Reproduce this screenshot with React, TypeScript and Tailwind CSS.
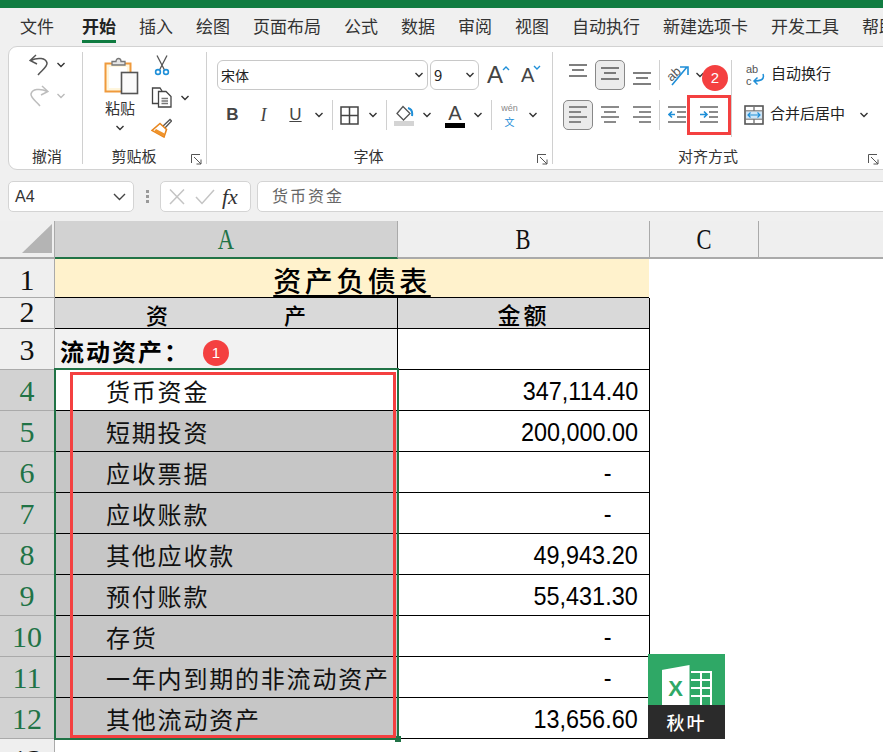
import React from "react";

const tabs = ["文件", "开始", "插入", "绘图", "页面布局", "公式", "数据", "审阅", "视图", "自动执行", "新建选项卡", "开发工具", "帮助"];

const rows = [
  { no: "4", name: "货币资金", value: "347,114.40" },
  { no: "5", name: "短期投资", value: "200,000.00" },
  { no: "6", name: "应收票据", value: "-" },
  { no: "7", name: "应收账款", value: "-" },
  { no: "8", name: "其他应收款", value: "49,943.20" },
  { no: "9", name: "预付账款", value: "55,431.30" },
  { no: "10", name: "存货", value: "-" },
  { no: "11", name: "一年内到期的非流动资产", value: "-" },
  { no: "12", name: "其他流动资产", value: "13,656.60" },
];

const Chev = ({ light }: { light?: boolean }) => (
  <svg width="10" height="6" viewBox="0 0 10 6" fill="none" stroke={light ? "#bbb" : "#333"} strokeWidth="1.4">
    <path d="M1.5 1 L5 4.5 L8.5 1" />
  </svg>
);

const Launcher = () => (
  <svg className="absolute right-[4px] bottom-[-1px]" width="11" height="11" viewBox="0 0 11 11" fill="none" stroke="#555" strokeWidth="1">
    <path d="M0.5 9 V0.5 H9" />
    <path d="M3 3 L10 10 M10 5.5 V10 H5.5" />
  </svg>
);

const Group = ({ label, className, labelClass, launcher, children }: { label: string; className: string; labelClass?: string; launcher?: boolean; children: React.ReactNode }) => (
  <div className={`relative flex flex-col shrink-0 h-[112px] ${className}`}>
    <div className="flex-1 min-h-0">{children}</div>
    <div className={`h-[18px] leading-[20px] text-center text-[15px] text-[#333] ${labelClass ?? ""}`}>{label}</div>
    {launcher && <Launcher />}
  </div>
);

// three horizontal lines for the vertical alignment buttons
const VAlign = ({ ys }: { ys: number[] }) => (
  <svg width="18" height="30" viewBox="0 0 18 30" stroke="#555" strokeWidth="1.4">
    <path d={`M0 ${ys[0]} H18 M3 ${ys[1]} H15 M0 ${ys[2]} H18`} />
  </svg>
);

// four lines for the horizontal alignment buttons
const HAlign = ({ mode }: { mode: "left" | "center" | "right" }) => {
  const short = mode === "left" ? "M0 {y} H12" : mode === "center" ? "M3 {y} H15" : "M6 {y} H18";
  return (
    <svg width="18" height="30" viewBox="0 0 18 30" stroke="#666" strokeWidth="1.6">
      <path d={`M0 7 H18 ${short.replace("{y}", "12")} M0 17 H18 ${short.replace("{y}", "22")}`} />
    </svg>
  );
};

const Indent = ({ out }: { out?: boolean }) => (
  <svg width="18" height="30" viewBox="0 0 18 30" fill="none">
    <path d="M0 7 H18 M9 12 H18 M9 17 H18 M0 22 H18" stroke="#666" strokeWidth="1.6" />
    {out ? (
      <path d="M7 14.5 H1 M4 11.5 L1 14.5 L4 17.5" stroke="#1f8fd8" strokeWidth="1.6" />
    ) : (
      <path d="M0 14.5 H7 M4 11.5 L7 14.5 L4 17.5" stroke="#1f8fd8" strokeWidth="1.6" />
    )}
  </svg>
);

const PasteIcon = () => (
  <svg width="36" height="38" viewBox="0 0 36 38" fill="none">
    <rect x="1.5" y="6.5" width="25" height="28" fill="#fff6dd" stroke="#ef9a3c" strokeWidth="2" />
    <rect x="5" y="10" width="18" height="21" fill="#fff" />
    <path d="M8 8 V4.5 H12 C12 0.5 17 0.5 17 4.5 H21 V8 Z" fill="#e6e6e6" stroke="#777" strokeWidth="1.3" />
    <rect x="17.5" y="15.5" width="16" height="21" fill="#fafafa" stroke="#555" strokeWidth="1.6" />
  </svg>
);

const Scissors = () => (
  <svg width="16" height="21" viewBox="0 0 16 21" fill="none">
    <path d="M3 0.5 L10.5 15 M13 0.5 L5.5 15" stroke="#555" strokeWidth="1.3" />
    <circle cx="4" cy="17" r="2.4" stroke="#1f8fd8" strokeWidth="1.6" />
    <circle cx="12" cy="17" r="2.4" stroke="#1f8fd8" strokeWidth="1.6" />
  </svg>
);

const CopyIcon = () => (
  <svg width="21" height="21" viewBox="0 0 21 21" fill="none" stroke="#444" strokeWidth="1.3">
    <path d="M8 16.5 H1.5 V1 H9 L11 4" />
    <path d="M7.5 4.5 H15 L20 9.5 V20 H7.5 Z" fill="#fff" />
    <path d="M10.5 11.5 H17 M10.5 14 H17 M10.5 16.5 H17" stroke="#777" />
  </svg>
);

const BrushIcon = () => (
  <svg width="21" height="20" viewBox="0 0 21 20" fill="none">
    <path d="M11 9 L19 1.5 L20.5 3 L13 11" fill="#fff" stroke="#555" strokeWidth="1.3" />
    <path d="M9 5.5 L15.5 11.5 L13 19 L1 12.5 Z" fill="#fff" stroke="#e8861e" strokeWidth="1.6" />
    <path d="M5 11 L13.5 15.5 L12.5 18.5 L3 13.5 Z" fill="#f0942c" />
  </svg>
);

const OrientIcon = () => (
  <svg className="overflow-visible" width="23" height="24" viewBox="0 0 23 24" fill="none">
    <text x="0" y="16" fontSize="13" fill="#555" transform="rotate(-42 6 12)" fontFamily="Liberation Sans, sans-serif">ab</text>
    <path d="M5 22 L20 4 M13 4 H21 V12" stroke="#1f8fd8" strokeWidth="1.6" />
  </svg>
);

const WrapIcon = () => (
  <svg className="overflow-visible" width="19" height="24" viewBox="0 0 19 24" fill="none">
    <text x="0" y="10" fontSize="11" fill="#555" fontFamily="Liberation Sans, sans-serif">ab</text>
    <text x="0" y="22" fontSize="11" fill="#555" fontFamily="Liberation Sans, sans-serif">c</text>
    <path d="M17 11 C19 17 14 18 8 18 M11.5 14.5 L8 18 L11.5 21.5" stroke="#1f8fd8" strokeWidth="1.5" />
  </svg>
);

const MergeIcon = () => (
  <svg width="20" height="20" viewBox="0 0 20 20" fill="none">
    <rect x="1" y="1" width="18" height="18" fill="#fff" stroke="#555" strokeWidth="1.6" />
    <path d="M1 6 H19 M1 14 H19 M10 1 V6 M10 14 V19" stroke="#777" strokeWidth="1.4" />
    <rect x="2" y="6.5" width="16" height="7" fill="#cfe6f7" />
    <path d="M4 10 H16 M6.5 7.5 L4 10 L6.5 12.5 M13.5 7.5 L16 10 L13.5 12.5" stroke="#1f8fd8" strokeWidth="1.2" />
  </svg>
);

const BorderIcon = () => (
  <svg width="19" height="19" viewBox="0 0 19 19" fill="none" stroke="#444" strokeWidth="1.5">
    <rect x="1" y="1" width="17" height="17" />
    <path d="M9.5 1 V18 M1 9.5 H18" />
  </svg>
);

const FillIcon = () => (
  <svg width="20" height="21" viewBox="0 0 20 21" fill="none">
    <path d="M9 1.5 L16 8.5 L9.5 15 L3 8.5 Z" fill="#fff" stroke="#555" strokeWidth="1.3" />
    <path d="M14 3 C18 4 18.5 8 18 11" stroke="#1f8fd8" strokeWidth="2" />
    <rect x="0" y="16" width="20" height="5" fill="#d4d4d4" />
  </svg>
);

const Sep = () => <div className="w-px h-[30px] bg-[#d0d0d0] shrink-0" />;

const Slot = ({ className, children }: { className: string; children: React.ReactNode }) => (
  <div className={`flex items-center justify-center h-[30px] shrink-0 ${className}`}>{children}</div>
);

export default function App() {
  return (
    <div className="relative w-[883px] h-[752px] overflow-hidden bg-[#f0f0f0] text-[#333] [font-family:'Noto_Sans_CJK_SC','Liberation_Sans',sans-serif]">
      <div className="h-2 bg-[#107c41]" />

      {/* tabs */}
      <div className="h-[38px] flex gap-[23px] pl-[20px] pt-[4px] text-[17px] leading-[27px] whitespace-nowrap">
        {tabs.map((t) =>
          t === "开始" ? (
            <div key={t} className="h-[31px] border-b-[3px] border-[#107c41] font-bold text-[#222]">{t}</div>
          ) : (
            <div key={t} className={t === "文件" ? "mr-[5px]" : ""}>{t}</div>
          )
        )}
      </div>

      {/* ribbon */}
      <div className="ml-[8px] w-[900px] h-[124px] py-[5px] flex bg-white border border-[#d2d2d2] rounded-l-[9px]">
        <Group label="撤消" labelClass="pl-[3px]" className="w-[74px] border-r border-[#d0d0d0]">
          <div className="flex items-center pl-[20px] pt-[2px] gap-[7px]">
            <svg width="20" height="22" viewBox="0 0 20 22" fill="none" stroke="#555" strokeWidth="1.5">
              <path d="M7 1 L1 6.5 L8 10 M1.5 6.5 C9 3 17 4 18 9 C18.5 13 13 16 9 21" />
            </svg>
            <Chev />
          </div>
          <div className="flex items-center pl-[20px] pt-[9px] gap-[7px]">
            <svg width="20" height="22" viewBox="0 0 20 22" fill="none" stroke="#bdbdbd" strokeWidth="1.5">
              <path d="M13 1 L19 6.5 L12 10 M18.5 6.5 C11 3 3 4 2 9 C1.5 13 7 16 11 21" />
            </svg>
            <Chev light />
          </div>
        </Group>

        <Group label="剪贴板" labelClass="pr-[21px]" launcher className="w-[124px] border-r border-[#d0d0d0]">
          <div className="flex">
            <div className="flex flex-col items-center w-[60px] ml-[9px] pt-[5px] shrink-0">
              <PasteIcon />
              <div className="text-[15px] leading-[20px] mt-[3px] -ml-[4px]">粘贴</div>
              <div className="mt-[7px] -ml-[4px]"><Chev /></div>
            </div>
            <div className="flex flex-col pt-[3px]">
              <div className="h-[23px] pl-[2px]"><Scissors /></div>
              <div className="flex items-center mt-[9px] h-[21px] gap-[8px] -ml-[1px]">
                <CopyIcon />
                <Chev />
              </div>
              <div className="mt-[10px] -ml-[1px]"><BrushIcon /></div>
            </div>
          </div>
        </Group>

        <Group label="字体" labelClass="pr-[22px]" launcher className="w-[346px] border-r border-[#d0d0d0]">
          <div className="flex pt-[8px] pl-[10px]">
            <div className="w-[211px] h-[30px] flex items-center justify-between pl-[3px] pr-[3px] border border-[#c8c8c8] rounded-[6px] text-[14px] text-[#222]">
              <span>宋体</span>
              <Chev />
            </div>
            <div className="ml-[2px] w-[49px] h-[30px] flex items-center justify-between pl-[3px] pr-[3px] border border-[#c8c8c8] rounded-[6px] text-[15px] text-[#222]">
              <span>9</span>
              <Chev />
            </div>
            <div className="relative ml-[8px] w-[34px] h-[30px] flex items-center text-[24px] text-[#444] [font-family:'Liberation_Sans',sans-serif]">
              A
              <svg className="absolute left-[15px] top-[6px]" width="8" height="5" viewBox="0 0 8 5" fill="none" stroke="#1f8fd8" strokeWidth="1.4"><path d="M1 4 L4 1 L7 4" /></svg>
            </div>
            <div className="relative w-[24px] h-[30px] flex items-center text-[20px] text-[#444] [font-family:'Liberation_Sans',sans-serif]">
              A
              <svg className="absolute left-[12px] top-[5px]" width="8" height="5" viewBox="0 0 8 5" fill="none" stroke="#1f8fd8" strokeWidth="1.4"><path d="M1 1 L4 4 L7 1" /></svg>
            </div>
          </div>
          <div className="flex items-center mt-[10px] text-[#444] [font-family:'Liberation_Sans',sans-serif]">
            <Slot className="w-[25px] ml-[13px] font-bold text-[17px]">B</Slot>
            <Slot className="w-[25px] ml-[6px] italic text-[18px] [font-family:'Liberation_Serif',serif]">I</Slot>
            <Slot className="w-[25px] ml-[7px] text-[17px] underline">U</Slot>
            <Slot className="w-[14px] ml-[4px]"><Chev /></Slot>
            <div className="ml-[6px]"><Sep /></div>
            <Slot className="w-[19px] ml-[7px]"><BorderIcon /></Slot>
            <Slot className="w-[14px] ml-[7px]"><Chev /></Slot>
            <div className="ml-[6px]"><Sep /></div>
            <Slot className="w-[20px] ml-[7px]"><FillIcon /></Slot>
            <Slot className="w-[14px] ml-[6px]"><Chev /></Slot>
            <div className="ml-[11px] w-[20px] h-[30px] flex flex-col items-center justify-center">
              <span className="text-[20px] leading-[20px] text-[#444]">A</span>
              <span className="w-[20px] h-[5px] bg-black" />
            </div>
            <Slot className="w-[14px] ml-[6px]"><Chev /></Slot>
            <div className="ml-[6px]"><Sep /></div>
            <div className="ml-[8px] w-[19px] h-[30px] flex flex-col items-center justify-center">
              <span className="h-[11px] text-[9px] leading-[11px] text-[#888]">wén</span>
              <span className="h-[13px] mt-[1px] text-[10px] leading-[13px] text-[#1f8fd8] [font-family:'Noto_Sans_CJK_SC',sans-serif]">文</span>
            </div>
            <Slot className="w-[14px] ml-[7px]"><Chev /></Slot>
          </div>
        </Group>

        <Group label="" launcher className="w-[330px]">
          <div className="flex pt-[8px] pl-[10px]">
            <div className="w-[168px]">
              <div className="flex items-center">
                <Slot className="w-[30px]"><VAlign ys={[5, 10, 16]} /></Slot>
                <Slot className="w-[30px] ml-[2px] bg-[#ebebeb] border border-[#888] rounded-[5px]"><VAlign ys={[8, 13, 19]} /></Slot>
                <Slot className="w-[30px] ml-[2px]"><VAlign ys={[13, 18, 24]} /></Slot>
                <div className="ml-[2px]"><Sep /></div>
                <Slot className="w-[23px] ml-[7px]"><OrientIcon /></Slot>
                <Slot className="w-[12px] ml-[4px]"><Chev /></Slot>
              </div>
              <div className="flex items-center mt-[10px]">
                <Slot className="w-[30px] bg-[#ebebeb] border border-[#888] rounded-[5px]"><HAlign mode="left" /></Slot>
                <Slot className="w-[30px] ml-[2px]"><HAlign mode="center" /></Slot>
                <Slot className="w-[30px] ml-[2px]"><HAlign mode="right" /></Slot>
                <div className="ml-[2px]"><Sep /></div>
                <Slot className="w-[30px] ml-[2px]"><Indent out /></Slot>
                <Slot className="w-[30px] ml-[2px]"><Indent /></Slot>
              </div>
            </div>
            <div className="w-px h-[77px] bg-[#d0d0d0] shrink-0" />
            <div className="ml-[12px] text-[15px] whitespace-nowrap text-[#222]">
              <div className="flex items-center h-[30px] gap-[6px] pl-[2px]">
                <WrapIcon />
                <span className="mb-[3px]">自动换行</span>
              </div>
              <div className="flex items-center h-[30px] mt-[10px] gap-[6px]">
                <MergeIcon />
                <span className="mb-[3px]">合并后居中</span>
                <span className="ml-[8px]"><Chev /></span>
              </div>
            </div>
          </div>
          <div className="absolute left-[125px] bottom-0 h-[18px] leading-[20px] text-[15px] text-[#333]">对齐方式</div>
        </Group>
      </div>

      {/* formula bar */}
      <div className="mt-[11px] h-[31px] flex items-center pl-[8px]">
        <div className="w-[126px] h-[31px] shrink-0 pl-[6px] pr-[7px] flex items-center justify-between bg-white border border-[#d4d4d4] rounded-[5px] text-[16px] [font-family:'Liberation_Sans',sans-serif]">
          <span>A4</span>
          <svg width="13" height="8" viewBox="0 0 13 8" fill="none" stroke="#444" strokeWidth="1.4"><path d="M1 1 L6.5 6.5 L12 1" /></svg>
        </div>
        <div className="w-[26px] shrink-0 flex flex-col items-center gap-[2px]">
          <span className="w-[3px] h-[3px] bg-[#999]" />
          <span className="w-[3px] h-[3px] bg-[#999]" />
          <span className="w-[3px] h-[3px] bg-[#999]" />
        </div>
        <div className="w-[91px] h-[31px] shrink-0 flex items-center pl-[7px] bg-white border border-[#d4d4d4] rounded-[5px]">
          <svg width="18" height="16" viewBox="0 0 18 16" fill="none" stroke="#c4c4c4" strokeWidth="1.5"><path d="M2 0.5 L16 15 M16 0.5 L2 15" /></svg>
          <svg className="ml-[9px]" width="20" height="16" viewBox="0 0 20 16" fill="none" stroke="#c4c4c4" strokeWidth="1.5"><path d="M1 8 L7 14.5 L19 1" /></svg>
          <span className="ml-[7px] italic text-[22px] leading-[26px] text-[#333] [font-family:'Liberation_Serif',serif]">fx</span>
        </div>
        <div className="ml-[6px] w-[660px] shrink-0 h-[31px] pl-[14px] pb-[3px] flex items-center bg-white border border-[#d4d4d4] rounded-l-[5px] text-[16px] tracking-[2px] text-[#666]">
          货币资金
        </div>
      </div>

      {/* sheet */}
      <div className="mt-[9px] bg-white">
        <div className="flex h-[38px] [font-family:'Liberation_Serif',serif] text-[30px] leading-[36px]">
          <div className="w-[55px] bg-[#efefef] border-b-2 border-r border-[#aaa] flex items-end justify-end pr-[2px] pb-[4px]">
            <div className="w-[30px] h-[29px] bg-[#b4b4b4] [clip-path:polygon(100%_0,100%_100%,0_100%)]" />
          </div>
          <div className="w-[343px] bg-[#d2d2d2] border-b-2 border-[#217346] border-r border-r-[#aaa] text-center text-[#217346]"><span className="inline-block scale-x-75">A</span></div>
          <div className="w-[252px] bg-[#efefef] border-b-2 border-r border-[#aaa] text-center text-[#111]"><span className="inline-block scale-x-75">B</span></div>
          <div className="w-[109px] bg-[#efefef] border-b-2 border-r border-[#aaa] text-center text-[#111]"><span className="inline-block scale-x-75">C</span></div>
          <div className="flex-1 bg-[#efefef] border-b-2 border-[#aaa]" />
        </div>

        <div className="flex h-[39px]">
          <RowHead no="1" leading="leading-[42px]" />
          <div className="w-[594px] bg-[#fff2cc] border-b border-black text-center text-[28px] leading-[42px] font-medium tracking-[3.5px] text-black underline underline-offset-[3px]">资产负债表</div>
        </div>
        <div className="flex h-[31px]">
          <RowHead no="2" leading="leading-[27px]" />
          <div className="w-[343px] bg-[#d9d9d9] border-b border-r border-black flex justify-center gap-[116px] text-[22px] leading-[32px] font-medium text-black">
            <span>资</span>
            <span>产</span>
          </div>
          <div className="w-[252px] bg-[#d9d9d9] border-b border-r border-black text-center text-[23px] leading-[32px] font-medium tracking-[3px] text-black">金额</div>
        </div>
        <div className="flex h-[41px]">
          <RowHead no="3" leading="leading-[42px]" />
          <div className="w-[343px] bg-[#f2f2f2] border-b border-r border-black pl-[5px] text-[24px] leading-[43px] font-bold tracking-[2px] text-black">流动资产：</div>
          <div className="w-[252px] border-b border-r border-black" />
        </div>
        {rows.map((r, i) => (
          <div key={r.no} className="flex h-[41px]">
            <RowHead no={r.no} leading="leading-[42px]" selected />
            <div className={`w-[343px] border-b border-r border-black pl-[51px] text-[24px] leading-[41px] tracking-[1.8px] text-[#111] whitespace-nowrap ${i === 0 ? "bg-white" : "bg-[#c6c6c6]"}`}>
              {r.name}
            </div>
            <div className={`w-[252px] border-b border-r border-black text-right leading-[42px] text-black [font-family:'Liberation_Sans',sans-serif] text-[26px] ${r.value === "-" ? "pr-[37px]" : "pr-[11px]"}`}>
              <span className="inline-block origin-right scale-x-[.9]">{r.value}</span>
            </div>
          </div>
        ))}
        <div className="flex h-[41px]">
          <RowHead no="13" leading="leading-[42px]" />
        </div>
      </div>

      {/* selection, annotations and watermark sit over the sheet */}
      <div className="absolute left-[54px] top-[368px] w-[345px] h-[372px] border-2 border-[#217346]" />
      <div className="absolute left-[395px] top-[736px] w-[6px] h-[6px] bg-[#217346]" />
      <div className="absolute left-[70px] top-[372px] w-[326px] h-[366px] border-[3px] border-[#f44040]" />
      <div className="absolute left-[687px] top-[95px] w-[44px] h-[40px] border-[3px] border-[#f44040]" />
      <div className="absolute left-[203px] top-[340px] w-[26px] h-[26px] rounded-full bg-[#f44040] text-white text-[15px] flex items-center justify-center [font-family:'Liberation_Sans',sans-serif]">1</div>
      <div className="absolute left-[702px] top-[65px] w-[26px] h-[26px] rounded-full bg-[#f44040] text-white text-[15px] flex items-center justify-center [font-family:'Liberation_Sans',sans-serif]">2</div>

      <div className="absolute left-[648px] top-[654px] w-[77px] h-[85px] flex flex-col">
        <div className="h-[51px] bg-[#2fa866] flex items-end justify-center gap-[1px]">
          <div className="w-[28px] h-[40px] bg-white [clip-path:polygon(0_5px,100%_0,100%_100%,0_100%)] flex items-center justify-center pt-[8px] text-[22px] leading-none font-bold text-[#2fa866] [font-family:'Liberation_Sans',sans-serif]">X</div>
          <svg width="21" height="34" viewBox="0 0 21 34" fill="none" stroke="#fff" strokeWidth="2">
            <path d="M0 1 H20 V34 M10 1 V34 M0 9 H20 M0 17 H20 M0 25 H20" />
          </svg>
        </div>
        <div className="flex-1 bg-[#2b2b2b] text-white text-[18px] tracking-[2px] flex items-center justify-center font-medium">秋叶</div>
      </div>
    </div>
  );
}

function RowHead({ no, leading, selected }: { no: string; leading: string; selected?: boolean }) {
  return (
    <div className={`w-[55px] h-full shrink-0 border-b border-r border-[#aaa] text-center text-[30px] [font-family:'Liberation_Serif',serif] ${leading} ${selected ? "bg-[#d2d2d2] text-[#217346]" : "bg-[#efefef] text-[#111]"}`}>
      {no}
    </div>
  );
}
